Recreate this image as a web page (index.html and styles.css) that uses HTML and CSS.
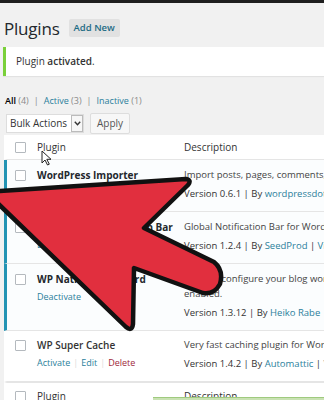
FILE: index.html
```html
<!DOCTYPE html>
<html lang="en">
<head>
    <meta charset="UTF-8">
    <meta name="viewport" content="width=device-width, initial-scale=1.0">
    <title>Plugins</title>
    <link rel="stylesheet" href="styles.css">
</head>
<body>
    <div id="adminbar"></div>
    <div id="wrap">
        <div class="title-row">
            <h1>Plugins</h1>
            <span class="add-new">Add New</span>
        </div>

        <div class="notice">Plugin <b>activated</b>.</div>

        <ul class="subsubsub">
            <li class="current">All <span class="count">(4)</span></li>
            <li class="sep">|</li>
            <li><a>Active</a> <span class="count">(3)</span></li>
            <li class="sep">|</li>
            <li><a>Inactive</a> <span class="count">(1)</span></li>
        </ul>

        <div class="tablenav">
            <div class="bulk-select">
                <span class="bulk-label">Bulk Actions</span>
                <span class="bulk-arrow">
                    <svg width="7" height="5" viewBox="0 0 7 5"><path d="M0.8 0.8 L3.5 3.8 L6.2 0.8" fill="none" stroke="#333" stroke-width="1.4"/></svg>
                </span>
            </div>
            <span class="btn">Apply</span>
        </div>

        <div class="plugins">
            <div class="row head">
                <div class="check"><span class="box"></span></div>
                <div class="name">Plugin</div>
                <div class="desc">Description</div>
            </div>

            <div class="row active">
                <div class="check"><span class="box"></span></div>
                <div class="name"><strong>WordPress Importer</strong></div>
                <div class="desc">
                    <p>Import posts, pages, comments, custom fields, categories, tags and more from a WordPress export file.</p>
                    <div class="meta">Version 0.6.1 | By <a>wordpressdotorg</a> | <a>View details</a></div>
                </div>
            </div>

            <div class="row active">
                <div class="check"><span class="box"></span></div>
                <div class="name">
                    <strong>WordPress Notification Bar</strong>
                    <div class="actions"><a>Deactivate</a></div>
                </div>
                <div class="desc">
                    <p>Global Notification Bar for WordPress.</p>
                    <div class="meta">Version 1.2.4 | By <a>SeedProd</a> | <a>View details</a></div>
                </div>
            </div>

            <div class="row active">
                <div class="check"><span class="box"></span></div>
                <div class="name">
                    <strong>WP Native Dashboard</strong>
                    <div class="actions"><a>Deactivate</a></div>
                </div>
                <div class="desc">
                    <p>You can configure your blog working at administration with different languages depends on users choice and capabilities the admin has<br>enabled.</p>
                    <div class="meta">Version 1.3.12 | By <a>Heiko Rabe</a> | <a>View details</a></div>
                </div>
            </div>

            <div class="row last">
                <div class="check"><span class="box"></span></div>
                <div class="name">
                    <strong class="plain">WP Super Cache</strong>
                    <div class="actions"><a>Activate</a><i>|</i><a>Edit</a><i>|</i><a class="delete">Delete</a></div>
                </div>
                <div class="desc">
                    <p>Very fast caching plugin for WordPress.</p>
                    <div class="meta">Version 1.4.2 | By <a>Automattic</a> | <a>View details</a></div>
                </div>
            </div>

            <div class="row head foot">
                <div class="check"><span class="box"></span></div>
                <div class="name">Plugin</div>
                <div class="desc">Description</div>
            </div>
        </div>
    </div>

    <!-- green strip peeking in at the bottom -->
    <div class="green-strip"></div>

    <!-- mouse pointer -->
    <svg class="cursor" width="11" height="16" viewBox="0 0 11 16">
        <path d="M1 1 L1 13 L4 10 L6.5 15 L8.3 14.2 L5.8 9.3 L10 9.3 Z" fill="#fff" stroke="#222" stroke-width="1" stroke-linejoin="round"/>
    </svg>

    <!-- red arrow drawn over the page -->
    <svg class="arrow" width="324" height="400" viewBox="0 0 324 400">
        <path d="M-14 192 L186 179 Q192 180 188 185 L144 228 L214 262 Q224 270 220 284 Q214 295 203 293 L134 268 L133 324 Q132 332 126 327 Z"
              fill="#e12f3e" stroke="#111" stroke-width="4.5" stroke-linejoin="round"/>
    </svg>
</body>
</html>
```

FILE: styles.css
```css
body {
    margin: 0;
    background: #f1f1f1;
    font-family: "Open Sans", "Noto Sans", sans-serif;
    color: #444;
    width: 324px;
    height: 400px;
    overflow: hidden;
    position: relative;
}
#adminbar {
    height: 3px;
    background: #1f1f1f;
}
#wrap {
    width: 620px;
    padding-left: 4px;
}
.title-row {
    display: flex;
    align-items: center;
    gap: 9px;
    padding-top: 13px;
    height: 24px;
}
h1 {
    margin: 0;
    font-size: 17px;
    font-weight: 400;
    color: #23282d;
    letter-spacing: -0.2px;
}
.add-new {
    background: #e1e1e1;
    color: #1e6b85;
    font-size: 9.5px;
    font-weight: 600;
    padding: 0 5px;
    height: 18px;
    line-height: 18px;
    border-radius: 2px;
}
.notice {
    margin: 7px 0 0 -1px;
    background: #fff;
    border-left: 3px solid #7ad03a;
    box-shadow: 0 1px 1px rgba(0, 0, 0, 0.06);
    height: 29px;
    line-height: 29px;
    padding-left: 10px;
    font-size: 10px;
    color: #333;
}
.notice b {
    font-weight: 600;
}
.subsubsub {
    list-style: none;
    margin: 0;
    padding: 16px 0 0 1px;
    display: flex;
    gap: 5px;
    font-size: 9px;
    height: 18px;
    line-height: 18px;
}
.subsubsub .current {
    color: #000;
    font-weight: 600;
}
.subsubsub a {
    color: #2b7f9c;
}
.count, .sep {
    color: #8a8a8a;
    font-weight: 400;
}
.tablenav {
    display: flex;
    gap: 6px;
    align-items: center;
    padding: 3px 0 0 2px;
    height: 21px;
}
.bulk-select {
    display: flex;
    height: 19px;
    background: #fff;
    border: 1px solid #ddd;
    box-sizing: border-box;
    width: 78px;
}
.bulk-label {
    flex-grow: 1;
    font-size: 10px;
    line-height: 17px;
    padding-left: 3px;
    color: #333;
}
.bulk-arrow {
    width: 10px;
    border: 1px solid #bbb;
    display: flex;
    align-items: center;
    justify-content: center;
    background: #f7f7f7;
}
.btn {
    height: 19px;
    line-height: 19px;
    padding: 0 6px;
    background: #f7f7f7;
    border: 1px solid #ddd;
    font-size: 10px;
    color: #555;
    border-radius: 2px;
}
.plugins {
    margin-top: 1px;
}
.row {
    display: grid;
    grid-template-columns: 30px 147px 1fr;
    background: #fff;
    border-left: 3px solid transparent;
    border-bottom: 1px solid #e5e5e5;
    padding: 7px 0 9px;
    font-size: 9.5px;
}
.row.active {
    background: #fbfdfe;
    border-left-color: #2393b3;
}
.row.last {
    padding-top: 6px;
}
.row.head {
    height: 24px;
    padding: 0;
    align-items: center;
    color: #333;
    font-size: 10px;
}
.row.foot {
    border-top: 1px solid #e5e5e5;
    height: 26px;
}
.check {
    padding-left: 8px;
}
.row:not(.head) .check {
    padding-top: 3px;
}
.box {
    display: block;
    width: 9px;
    height: 9px;
    border: 1px solid #b4b9be;
    background: #fff;
    border-radius: 1px;
}
.name strong {
    display: block;
    font-size: 10px;
    line-height: 16px;
    font-weight: 700;
    color: #23282d;
    white-space: nowrap;
}
.name strong.plain {
    font-weight: 600;
    color: #333;
}
.actions {
    margin-top: 2px;
    line-height: 16px;
    font-size: 9px;
}
.actions a {
    color: #2b7f9c;
}
.actions i {
    font-style: normal;
    color: #ddd;
    padding: 0 3px;
}
.actions a.delete {
    color: #a0283a;
}
.desc p {
    margin: 0;
    line-height: 15px;
    color: #444;
    white-space: nowrap;
}
.meta {
    margin-top: 4px;
    line-height: 16px;
    color: #333;
    white-space: nowrap;
}
.meta a {
    color: #2b7f9c;
}
.green-strip {
    position: absolute;
    left: 153px;
    right: 0;
    top: 397px;
    height: 3px;
    background: #c9e2b3;
    border-top: 1px solid #9fca7e;
}
.cursor {
    position: absolute;
    left: 41px;
    top: 150px;
}
.arrow {
    position: absolute;
    left: 0;
    top: 0;
    pointer-events: none;
}
```
